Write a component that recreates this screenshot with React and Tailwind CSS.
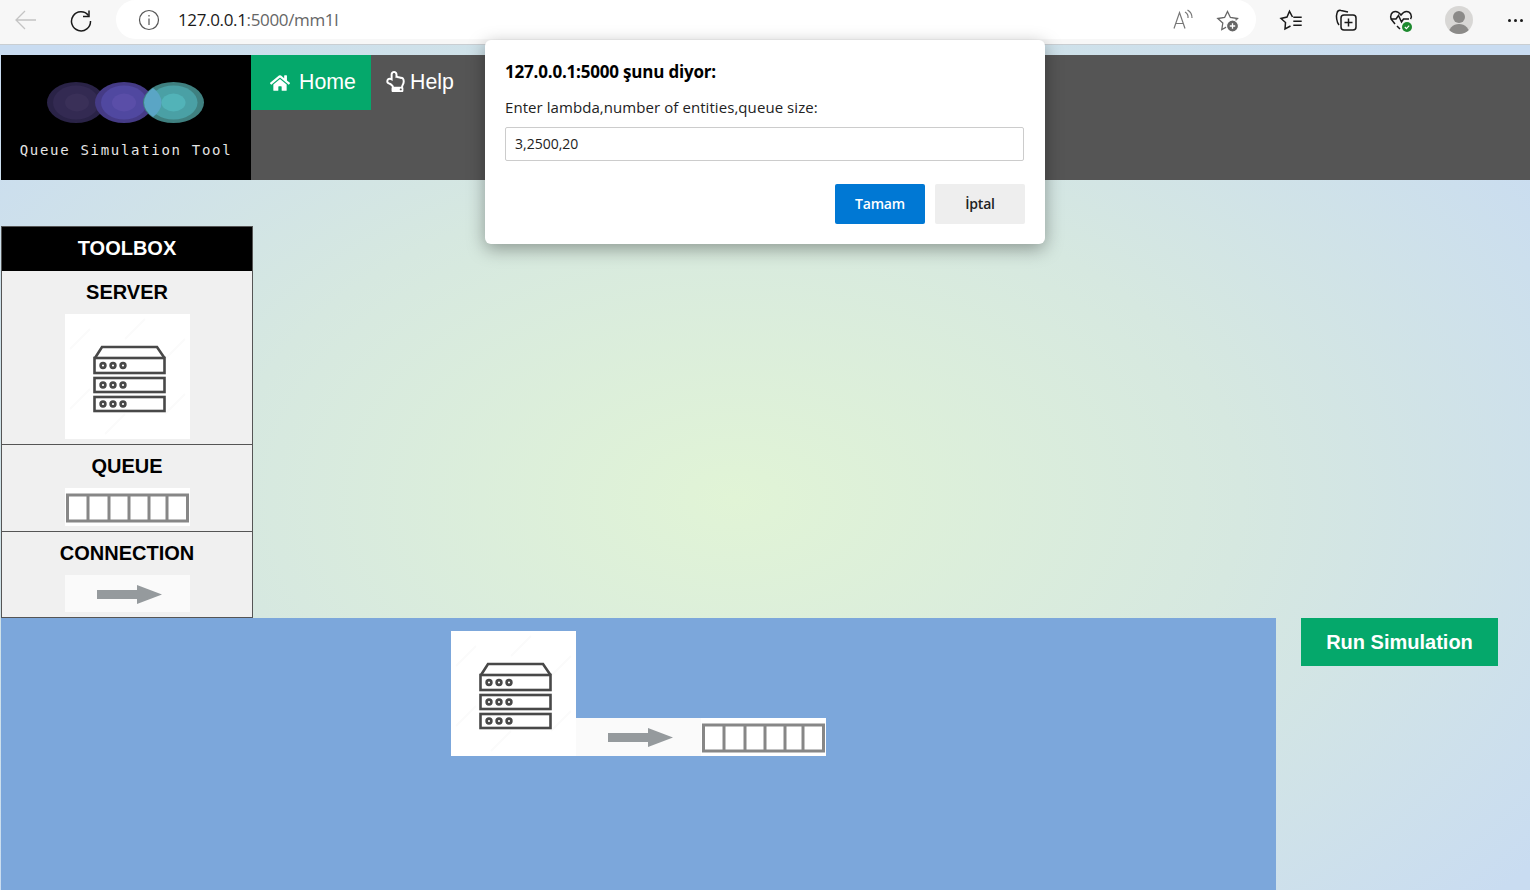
import { FaHome, FaRegHandPointUp } from 'react-icons/fa';

function ServerImage() {
    return (
        <svg width="125" height="125" viewBox="0 0 125 125" className="block bg-white shrink-0">
            {/* faint stripes of the stock picture */}
            <g stroke="#fbfbfb" strokeWidth="2">
                <path d="M5 35 L25 15" />
                <path d="M60 25 L80 5" />
                <path d="M100 45 L120 25" />
                <path d="M5 95 L25 75" />
                <path d="M100 100 L120 80" />
                <path d="M40 120 L60 100" />
            </g>
            <g fill="none" stroke="#484848" strokeWidth="2.6">
                <path d="M30 44 L37 33 H92 L99.5 44" />
                <rect x="29.5" y="44" width="70" height="15" />
                <rect x="29.5" y="64" width="70" height="14" />
                <rect x="29.5" y="83" width="70" height="14" />
                <circle cx="38" cy="51.5" r="2.4" />
                <circle cx="48" cy="51.5" r="2.4" />
                <circle cx="58" cy="51.5" r="2.4" />
                <circle cx="38" cy="71" r="2.4" />
                <circle cx="48" cy="71" r="2.4" />
                <circle cx="58" cy="71" r="2.4" />
                <circle cx="38" cy="90" r="2.4" />
                <circle cx="48" cy="90" r="2.4" />
                <circle cx="58" cy="90" r="2.4" />
            </g>
        </svg>
    );
}

function QueueImage() {
    return (
        <svg width="125" height="38" viewBox="0 0 125 38" className="block bg-white shrink-0">
            <g fill="none" stroke="#878787" strokeWidth="3">
                <rect x="2.5" y="7" width="120" height="26" />
                <path d="M23 7 V33 M44 7 V33 M64 7 V33 M84 7 V33 M102 7 V33" />
            </g>
        </svg>
    );
}

function ArrowImage({ height = 37 }) {
    return (
        <svg width="125" height={height} viewBox={`0 0 125 ${height}`} className="block bg-[#fafafa] shrink-0">
            <path d="M32 15 H72 V10 L97 19.5 L72 29 V24 H32 Z" fill="#959a9d" />
        </svg>
    );
}

function ToolSection({ title, children, last }) {
    return (
        <div className={`flex flex-col items-center pb-[5px] bg-[#f0f0f0] ${last ? '' : 'border-b border-[#555]'}`}>
            <div className="h-[43px] pb-[2px] flex items-center justify-center text-[20px] font-bold text-black">{title}</div>
            {children}
        </div>
    );
}

function Logo() {
    return (
        <div className="w-[250px] h-[125px] bg-black flex flex-col items-center shrink-0">
            <svg width="250" height="85" viewBox="0 0 250 85" className="block shrink-0">
                <ellipse cx="75" cy="47.5" rx="29" ry="20.5" fill="#2a2347" />
                <ellipse cx="75" cy="47.5" rx="23" ry="17" fill="#332a52" />
                <ellipse cx="76" cy="47.5" rx="12" ry="9" fill="#3a3058" />
                <ellipse cx="123" cy="47.5" rx="29" ry="20.5" fill="#453b86" />
                <ellipse cx="123" cy="47.5" rx="23" ry="17" fill="#5048a0" />
                <ellipse cx="123" cy="47.5" rx="12" ry="9" fill="#5a4ea8" />
                <ellipse cx="172.5" cy="47.5" rx="30.5" ry="20.5" fill="#3f8080" />
                <ellipse cx="172.5" cy="47.5" rx="24" ry="17" fill="#4aa0a5" />
                <ellipse cx="172.5" cy="47.5" rx="12" ry="9" fill="#52b3b8" />
                <path d="M152 33 A30.5 20.5 0 0 0 152 62 A29 20.5 0 0 0 152 33 Z" fill="#5aa5c5" />
            </svg>
            <div className="h-[20px] flex items-center text-[14px] tracking-[1.7px] text-[#e4e4e4] whitespace-nowrap font-['DejaVu_Sans_Mono',monospace]">
                Queue Simulation Tool
            </div>
        </div>
    );
}

function BrowserBar() {
    return (
        <div className="h-[45px] bg-[#f7f7f7] border-b border-[#c9ced2] flex items-start shrink-0">
            {/* back */}
            <svg width="24" height="24" viewBox="0 0 24 24" className="ml-[14px] mt-[8px] shrink-0" fill="none" stroke="#c4c4c4" strokeWidth="1.3">
                <path d="M2 12 H22 M11 3 L2 12 L11 21" />
            </svg>
            {/* reload */}
            <svg width="24" height="24" viewBox="0 0 24 24" className="ml-[31px] mt-[8px] shrink-0" fill="none" stroke="#1a1a1a" strokeWidth="1.5">
                <path d="M19.5 7.5 A9.5 9.5 0 1 0 21.5 13" />
                <path d="M20 2.5 V8.5 H14" />
            </svg>
            {/* address pill */}
            <div className="ml-[23px] w-[1140px] h-[39px] bg-white rounded-[20px] flex items-center shrink-0">
                <svg width="22" height="22" viewBox="0 0 22 22" className="ml-[22px] shrink-0" fill="none" stroke="#555" strokeWidth="1.2">
                    <circle cx="11" cy="11" r="9.5" />
                    <path d="M11 9.5 V16 M11 6 V7.6" />
                </svg>
                <div className="ml-[18px] text-[17px] text-[#666] whitespace-nowrap font-['Open_Sans',sans-serif] tracking-[-0.35px]">
                    <span className="text-[#1a1a1a]">127.0.0.1</span>:5000/mm1l
                </div>
                <svg width="22" height="22" viewBox="0 0 22 22" className="ml-auto shrink-0" fill="none" stroke="#777" strokeWidth="1.2">
                    <path d="M2 19.5 L7.5 3.5 L13 19.5 M3.8 14.5 H11.2" />
                    <path d="M13 3 A6 6 0 0 1 16 9 M15.5 1 A9 9 0 0 1 20 9" />
                </svg>
                <svg width="24" height="24" viewBox="0 0 24 24" className="ml-[22px] mr-[16px] shrink-0">
                    <path d="M11.5 3.5 L14.4 9.5 L21.5 10.5 L16.5 15.5 L17.5 21 L11.5 18.5 L5.8 21.5 L6.8 15 L1.8 10.5 L8.6 9.5 Z" fill="none" stroke="#666" strokeWidth="1.3" />
                    <circle cx="16.5" cy="18" r="6" fill="#666" stroke="#fff" strokeWidth="1.2" />
                    <path d="M16.5 15.3 V20.7 M13.8 18 H19.2" stroke="#fff" strokeWidth="1.3" />
                </svg>
            </div>
            {/* favorites */}
            <svg width="24" height="24" viewBox="0 0 24 24" className="ml-[23px] mt-[8px] shrink-0" fill="none" stroke="#1a1a1a" strokeWidth="1.5">
                <path d="M13.5 9 L10.5 3.3 L8 9 L2 10.5 L6.5 14.5 L6 21 L11.5 18" />
                <path d="M14.3 9.3 H22.7 M14.3 13.3 H22.7 M14.3 17.3 H22.7" />
            </svg>
            {/* collections */}
            <svg width="24" height="24" viewBox="0 0 24 24" className="ml-[31px] mt-[8px] shrink-0" fill="none" stroke="#1a1a1a" strokeWidth="1.5">
                <path d="M5 17 C2.5 14 2 8 3 5 C3.5 3 5 2 7 2.5 L14 4" />
                <rect x="7" y="7" width="15" height="15" rx="3" />
                <path d="M14.5 10.5 V18.5 M10.5 14.5 H18.5" />
            </svg>
            {/* browser essentials */}
            <svg width="24" height="24" viewBox="0 0 24 24" className="ml-[31px] mt-[8px] shrink-0" fill="none">
                <path d="M6 16 L2.5 11.5 C0.5 8 2.5 3.5 6.5 3.5 C9 3.5 10.5 5 12 7 C13.5 5 15 3.5 17.5 3.5 C21.5 3.5 23.5 8 21.5 11" stroke="#1a1a1a" strokeWidth="1.5" />
                <path d="M1.5 11 H7 L9.5 7.5 L12.5 14 L14.5 11 H20" stroke="#1a1a1a" strokeWidth="1.5" />
                <path d="M8 18 L11 21" stroke="#1a1a1a" strokeWidth="1.5" />
                <circle cx="18" cy="19" r="5" fill="#1d8a2f" />
                <path d="M15.8 19 L17.4 20.6 L20.2 17.6" stroke="#fff" strokeWidth="1.1" />
            </svg>
            {/* profile */}
            <div className="ml-[32px] mt-[6px] w-[28px] h-[28px] rounded-full bg-[#d8d7d5] overflow-hidden flex flex-col items-center shrink-0">
                <div className="mt-[5px] w-[12px] h-[12px] rounded-full bg-[#8b8a88] shrink-0" />
                <div className="mt-[1px] w-[22px] h-[14px] rounded-t-full bg-[#8b8a88] shrink-0" />
            </div>
            {/* more */}
            <div className="ml-[35px] mt-[19px] flex gap-[3px] shrink-0">
                <div className="w-[3px] h-[3px] rounded-full bg-[#1a1a1a]" />
                <div className="w-[3px] h-[3px] rounded-full bg-[#1a1a1a]" />
                <div className="w-[3px] h-[3px] rounded-full bg-[#1a1a1a]" />
            </div>
        </div>
    );
}

function PromptDialog() {
    return (
        <div className="absolute left-[485px] top-[40px] w-[560px] h-[204px] bg-white rounded-md shadow-[0_5px_18px_rgba(0,0,0,0.35)] px-[20px] pt-[20px] font-['Open_Sans',sans-serif] text-black">
            <div className="h-[23px] flex items-center text-[17px] font-bold tracking-[-0.2px] whitespace-nowrap">127.0.0.1:5000 şunu diyor:</div>
            <div className="mt-[14px] h-[20px] flex items-center text-[15px] tracking-[0.07px] text-[#222] whitespace-nowrap">Enter lambda,number of entities,queue size:</div>
            <div className="mt-[10px] w-[519px] h-[34px] border border-[#ccc] rounded-[2px] px-[9px] pb-[2px] flex items-center text-[14px] text-[#222]">3,2500,20</div>
            <div className="mt-[23px] flex justify-end gap-[10px]">
                <button className="w-[90px] h-[40px] pb-[2px] bg-[#0078d4] rounded-[2px] text-white text-[14px] font-semibold tracking-[-0.2px]">Tamam</button>
                <button className="w-[90px] h-[40px] pb-[2px] bg-[#eeeeee] rounded-[2px] text-[#222] text-[14px] font-semibold tracking-[-0.2px]">İptal</button>
            </div>
        </div>
    );
}

export default function App() {
    return (
        <div className="relative w-[1530px] h-[890px] overflow-hidden flex flex-col bg-[radial-gradient(ellipse_at_48%_56%,#e1f4d6_0%,#d6e8e0_45%,#c9dcf1_88%)] font-['Liberation_Sans',Arial,sans-serif]">
            <BrowserBar />

            {/* nav */}
            <div className="mt-[10px] ml-px h-[125px] flex items-start bg-[#555555] shrink-0">
                <Logo />
                <a className="w-[120px] h-[55px] bg-[#05a86b] text-white text-[21.33px] flex items-center pl-[19px] shrink-0">
                    <FaHome className="w-[20px] h-[20px]" />
                    <span className="ml-[9px]">Home</span>
                </a>
                <a className="h-[55px] text-white text-[21.33px] flex items-center pl-[15px] shrink-0">
                    <FaRegHandPointUp className="w-[19px] h-[21px] mb-[2px]" />
                    <span className="ml-[5px]">Help</span>
                </a>
            </div>

            {/* toolbox */}
            <div className="mt-[46px] ml-px w-[252px] border border-[#555] shrink-0 bg-[#f0f0f0]">
                <div className="h-[44px] pb-[2px] bg-black text-white text-[20px] font-bold flex items-center justify-center">TOOLBOX</div>
                <ToolSection title="SERVER">
                    <ServerImage />
                </ToolSection>
                <ToolSection title="QUEUE">
                    <QueueImage />
                </ToolSection>
                <ToolSection title="CONNECTION" last>
                    <ArrowImage />
                </ToolSection>
            </div>

            {/* canvas + run */}
            <div className="flex items-start flex-1 ml-px">
                <div className="relative w-[1275px] h-full bg-[#7ca7db] shrink-0">
                    <div className="absolute left-[450px] top-[13px]">
                        <ServerImage />
                    </div>
                    <div className="absolute left-[575px] top-[100px]">
                        <ArrowImage height={38} />
                    </div>
                    <div className="absolute left-[700px] top-[100px]">
                        <QueueImage />
                    </div>
                </div>
                <button className="ml-[25px] w-[197px] h-[48px] bg-[#05a86b] text-white text-[20px] font-bold shrink-0">Run Simulation</button>
            </div>

            <PromptDialog />
        </div>
    );
}
